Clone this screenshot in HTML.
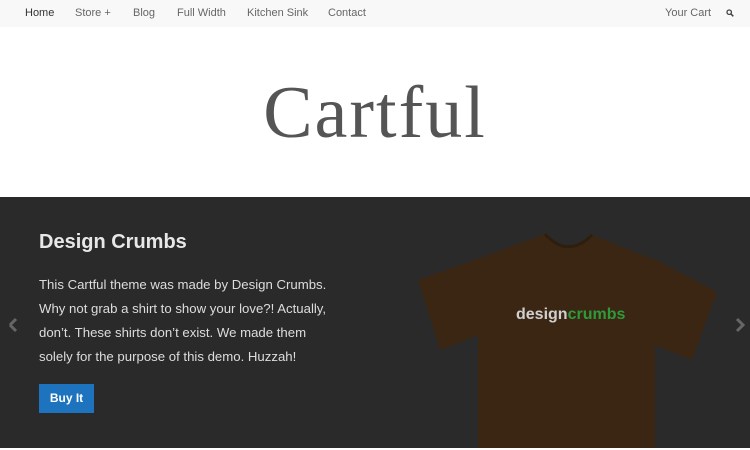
<!DOCTYPE html>
<html><head><meta charset="utf-8"><style>
*{margin:0;padding:0;box-sizing:border-box}
body{width:750px;height:450px;overflow:hidden;background:#fff;font-family:"Liberation Sans",sans-serif}
.nav{height:27px;background:#f8f8f8;position:relative;font-size:11px;color:#666}
.nav span{position:absolute;top:7px}
.hdr{height:170px;position:relative}
.hdr h1{position:absolute;left:0;right:0;top:44px;text-align:center;font-family:"Liberation Serif",serif;font-weight:normal;font-size:74px;color:#555;letter-spacing:2px}
.hero{position:absolute;top:197px;left:0;width:750px;height:251px;background:#2a2a2a}
.hero h2{position:absolute;left:39px;top:34px;font-size:20px;color:#e8e8e8;font-weight:bold}
.hero p{position:absolute;left:39px;top:76px;width:300px;font-size:13.2px;line-height:24px;color:#ddd}
.btn{position:absolute;left:39px;top:187px;width:55px;height:29px;background:#1e73be;color:#fff;font-size:12px;font-weight:bold;text-align:center;line-height:29px}
</style></head><body>
<div class="nav">
<span style="left:25px;color:#333">Home</span>
<span style="left:75px">Store +</span>
<span style="left:133px">Blog</span>
<span style="left:177px">Full Width</span>
<span style="left:247px">Kitchen Sink</span>
<span style="left:328px">Contact</span>
<span style="left:665px">Your Cart</span>
<svg style="position:absolute;left:726px;top:9px" width="8" height="8" viewBox="0 0 8 8"><circle cx="3.2" cy="3.2" r="2.2" fill="none" stroke="#444" stroke-width="1.3"/><path d="M4.8 4.8L7.3 7.3" stroke="#444" stroke-width="1.5"/></svg>
</div>
<div class="hdr"><h1>Cartful</h1></div>
<div class="hero">
<h2>Design Crumbs</h2>
<p>This Cartful theme was made by Design Crumbs. Why not grab a shirt to show your love?! Actually, don’t. These shirts don’t exist. We made them solely for the purpose of this demo. Huzzah!</p>
<div class="btn">Buy It</div>
<svg style="position:absolute;left:0;top:0" width="750" height="251">
<path d="M545 37 Q568 62 592 38 L660 65 L717 95 L692 163 L655 148 L655 251 L478 251 L478 138 L440 153 L418 83 L480 61 Z" fill="#3a2612"/>
<path d="M545 37 Q568 62 592 38" fill="none" stroke="#2e1e0e" stroke-width="3"/>
<text x="516" y="122" font-family="Liberation Sans,sans-serif" font-weight="bold" font-size="16" fill="#d0d0d0">design<tspan fill="#2f9a3a">crumbs</tspan></text>
<path d="M10 128 L16 122 M10 128 L16 134" stroke="#666" stroke-width="3" fill="none"/>
<path d="M737 122 L743 128 L737 134" stroke="#666" stroke-width="3" fill="none"/>
</svg>
</div>
</body></html>
